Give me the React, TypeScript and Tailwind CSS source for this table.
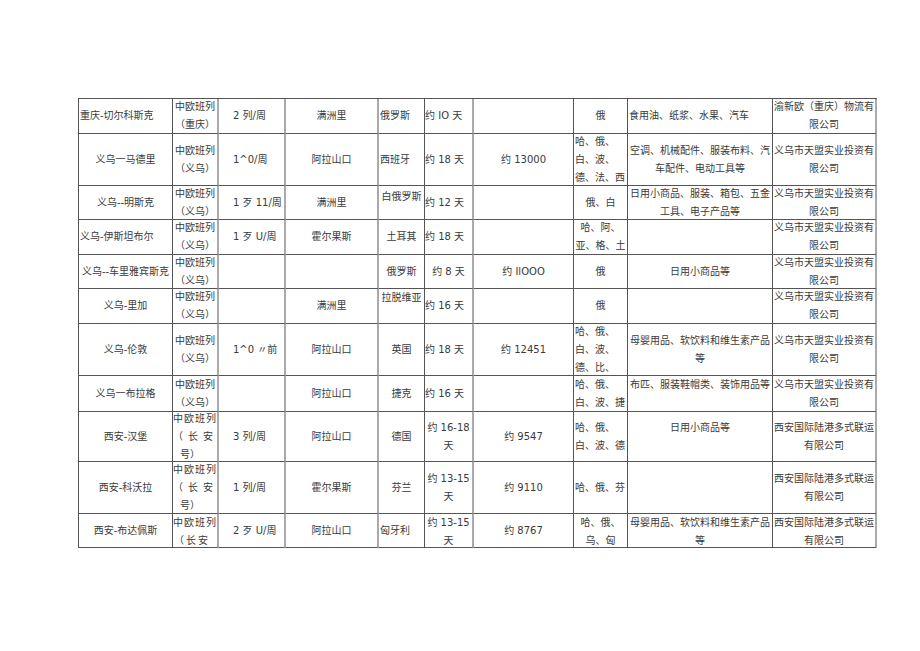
import React from 'react';

type Cell = [React.ReactNode, string?];

const C = 'justify-center items-center text-center';
const L1 = 'justify-center items-start text-left pl-[1px]';
const L0 = 'justify-center items-start text-left';
const P3 = 'justify-center items-start text-left pl-[14px]';
const TOP = 'justify-start items-center text-center';
const TOPL = 'justify-start items-start text-left pl-[1px]';

const colDefault = [C, C, P3, C, C, C, C, C, C, C];

const colBorder = [
  'border-r border-r-[#555]',
  'border-r-2 border-r-[#aaa]',
  'border-r-2 border-r-[#aaa]',
  'border-r-2 border-r-[#aaa]',
  'border-r border-r-[#555]',
  'border-r-2 border-r-[#aaa]',
  'border-r border-r-[#555]',
  'border-r border-r-[#555]',
  'border-r border-r-[#555]',
  'border-r-2 border-r-[#aaa]',
];

const yiwu = '中欧班列\n（义乌）';
const tianmeng = '义乌市天盟实业投资有\n限公司';
const xian = '西安国际陆港多式联运\n有限公司';

const changan3 = (lh: string): Cell => [
  <>
    <span className="tracking-[1px]">中欧班列</span>
    <span className="tracking-[5px]">（长安</span>
    <span className="pl-[7px]">号）</span>
  </>,
  'justify-center items-start text-left ' + lh,
];

const rows: Cell[][] = [
  [
    ['重庆-切尔科斯克', L1],
    ['中欧班列\n（重庆）'],
    ['2 列/周'],
    ['满洲里'],
    ['俄罗斯', L1],
    ['约 IO 天', L0],
    [''],
    ['俄'],
    ['食用油、纸浆、水果、汽车', L1],
    ['渝新欧（重庆）物流有\n限公司'],
  ],
  [
    ['义乌一马德里'],
    [yiwu],
    ['1^0/周'],
    ['阿拉山口'],
    ['西班牙', L1],
    ['约 18 天', L0],
    ['约 13000'],
    ['哈、俄、\n白、波、\n德、法、西', L1 + ' leading-[17.5px]'],
    ['空调、机械配件、服装布料、汽\n车配件、电动工具等'],
    [tianmeng],
  ],
  [
    ['义乌--明斯克'],
    [yiwu],
    ['1 歹 11/周'],
    ['满洲里'],
    ['白俄罗斯', TOP + ' pt-[2px]'],
    ['约 12 天', L0],
    [''],
    ['俄、白'],
    ['日用小商品、服装、箱包、五金\n工具、电子产品等'],
    [tianmeng],
  ],
  [
    ['义乌-伊斯坦布尔', L1],
    [yiwu],
    ['1 歹 U/周'],
    ['霍尔果斯'],
    ['土耳其'],
    ['约 18 天', L0],
    [''],
    ['哈、阿、\n亚、格、土'],
    [''],
    [tianmeng],
  ],
  [
    ['义乌--车里雅宾斯克'],
    [yiwu],
    [''],
    [''],
    ['俄罗斯'],
    ['约 8 天'],
    ['约 IlOOO'],
    ['俄'],
    ['日用小商品等'],
    [tianmeng],
  ],
  [
    ['义乌-里加'],
    [yiwu],
    [''],
    ['满洲里'],
    ['拉脱维亚', TOP],
    ['约 16 天', L0],
    [''],
    ['俄'],
    [''],
    [tianmeng],
  ],
  [
    ['义乌-伦敦'],
    [yiwu],
    ['1^0 〃前'],
    ['阿拉山口'],
    ['英国'],
    ['约 18 天', L0],
    ['约 12451'],
    ['哈、俄、\n白、波、\n德、比、', L1 + ' leading-[17.5px]'],
    ['母婴用品、软饮料和维生素产品\n等'],
    [tianmeng],
  ],
  [
    ['义乌一布拉格'],
    [yiwu],
    [''],
    ['阿拉山口'],
    ['捷克'],
    ['约 16 天', L0],
    [''],
    ['哈、俄、\n白、波、捷', L1],
    ['布匹、服装鞋帽类、装饰用品等', TOP],
    [tianmeng],
  ],
  [
    ['西安-汉堡'],
    changan3('leading-[15px]'),
    ['3 列/周'],
    ['阿拉山口'],
    ['德国'],
    ['约 16-18\n天'],
    ['约 9547'],
    ['哈、俄、\n白、波、德', L1],
    ['日用小商品等', TOP + ' pt-[7px]'],
    [xian],
  ],
  [
    ['西安-科沃拉'],
    changan3('leading-[16px]'),
    ['1 列/周'],
    ['霍尔果斯'],
    ['芬兰'],
    ['约 13-15\n天'],
    ['约 9110'],
    ['哈、俄、芬', L1],
    [''],
    [xian],
  ],
  [
    ['西安-布达佩斯'],
    [
      <>
        <span className="tracking-[1px]">中欧班列</span>
        <span className="tracking-[2px] pl-[1px]">（长安</span>
      </>,
      'justify-start items-start text-left',
    ],
    ['2 歹 U/周'],
    ['阿拉山口'],
    ['匈牙利', L1],
    ['约 13-15\n天', TOP],
    ['约 8767'],
    ['哈、俄、\n乌、匈', TOP],
    ['母婴用品、软饮料和维生素产品\n等', TOP],
    [xian, TOP],
  ],
];

function CellBox({ cell, col }: { cell: Cell; col: number }) {
  const [content, cls] = cell;
  const layout = cls ?? colDefault[col];
  const body =
    typeof content === 'string'
      ? content.split('\n').map((line, i) => (
          <span key={i} className="whitespace-nowrap">
            {line}
          </span>
        ))
      : content;
  return (
    <div className={`border-b border-b-[#555] overflow-hidden ${colBorder[col]}`}>
      <div className={`flex flex-col h-full leading-[18px] whitespace-nowrap ${layout}`}>{body}</div>
    </div>
  );
}

export default function App() {
  return (
    <div className="w-[920px] h-[651px] bg-white pt-[98px] pl-[78px] text-[10px] text-[#3a3a3a] font-[family-name:DejaVu_Sans,Noto_Sans_CJK_SC,sans-serif]">
      <div className="grid w-max grid-cols-[94px_46px_67px_93px_46px_49px_100px_54px_145px_104px] grid-rows-[35px_52px_34px_35px_34px_35px_52px_36px_50px_52px_34px] border-l border-t border-[#555]">
        {rows.map((row, r) => row.map((cell, c) => <CellBox key={`${r}-${c}`} cell={cell} col={c} />))}
      </div>
    </div>
  );
}
